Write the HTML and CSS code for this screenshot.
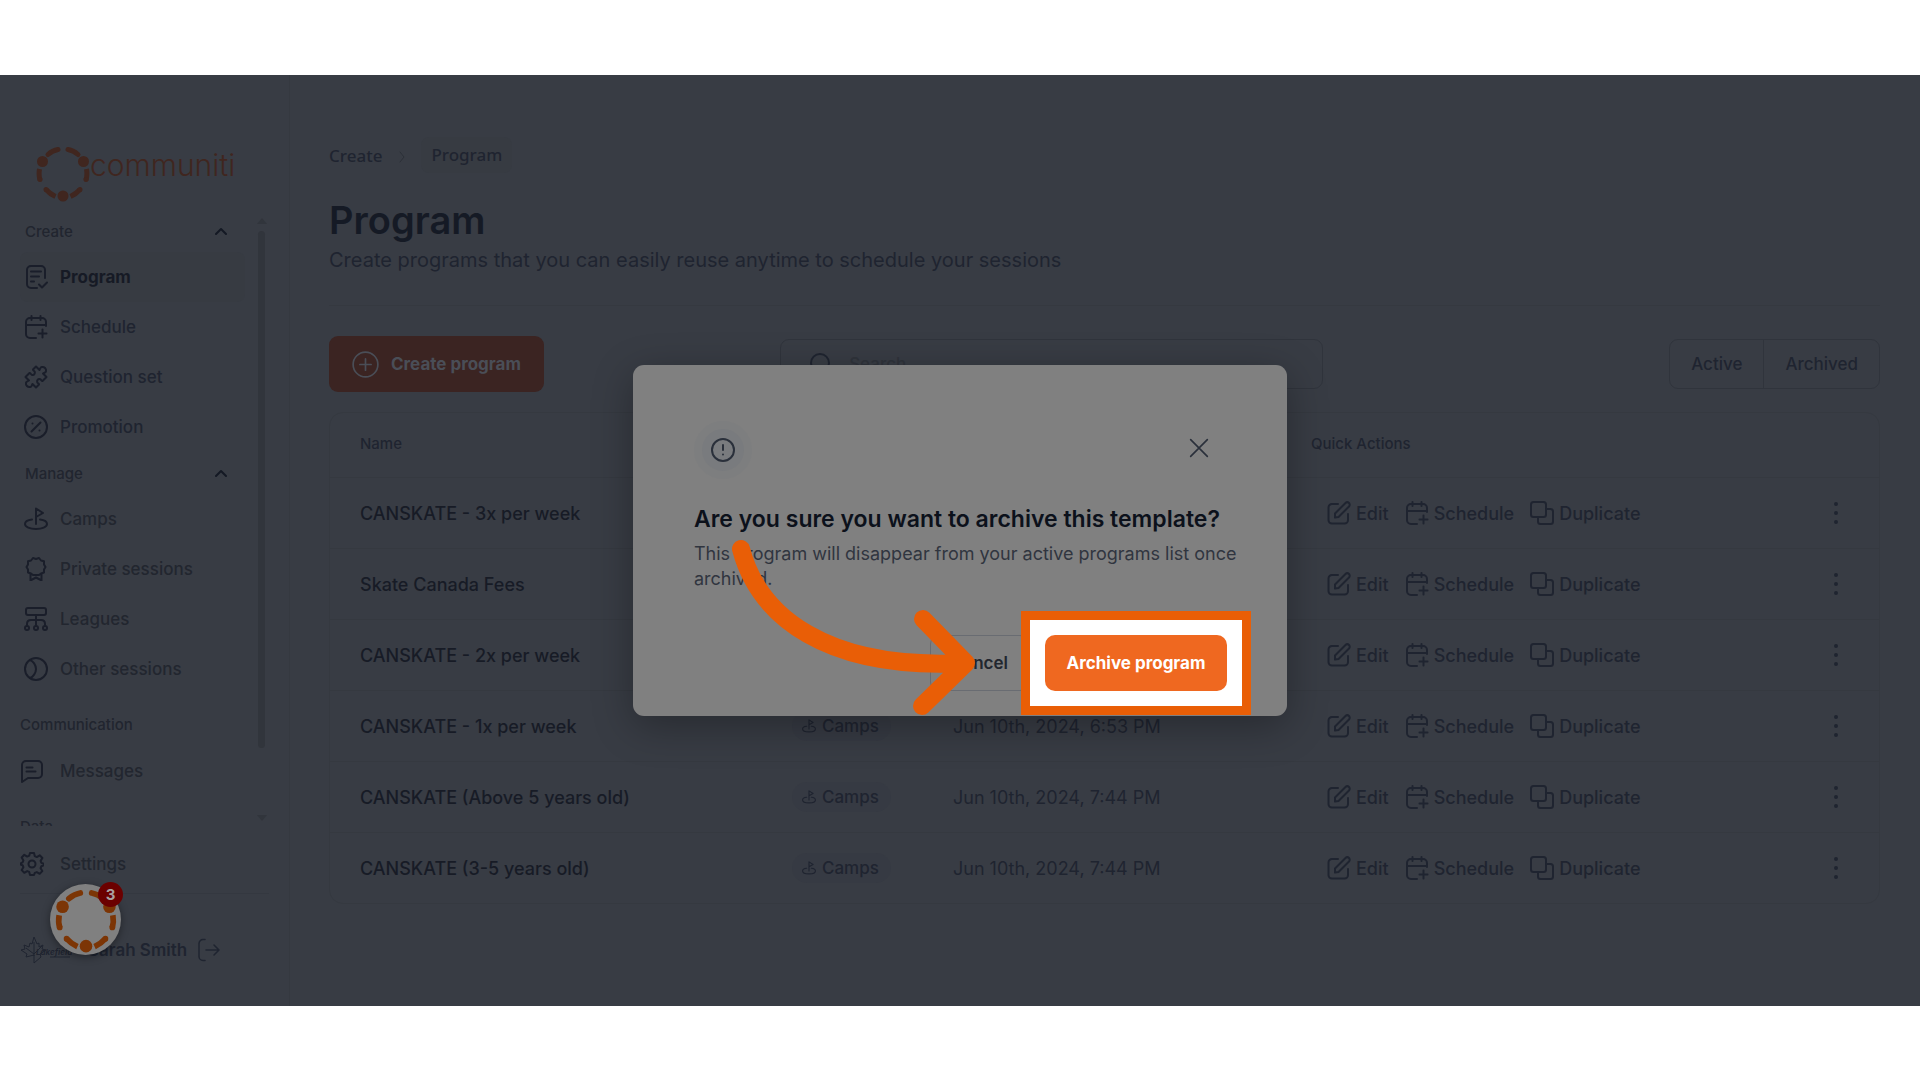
FILE: index.html
```
<!DOCTYPE html>
<html lang="en">
    <head>
        <title>Program - communiti</title>
        <meta charset="UTF-8" />
        <meta name="viewport" content="width=device-width, initial-scale=1" />
        <link rel="stylesheet" href="styles.css">
    </head>
    <body>
        <!-- shared icons -->
        <svg class="sprite" aria-hidden="true">
            <symbol id="ring" viewBox="0 0 54 56">
                <g fill="none" stroke="currentColor" stroke-width="5">
                    <path d="M12 8.500 Q16.500 4.500 22 3.500M32 3.500 Q37.500 4.500 42 8.500" stroke-linecap="round" />
                    <path d="M3.500 23 Q2.500 29 4 34M50.500 23 Q51.500 29 50 34" />
                    <path d="M4 33.500v.1M50 33.500v.1" stroke-linecap="round" />
                    <path d="M10 43.500 Q14 48 19.500 50.500M44 43.500 Q40 48 34.500 50.500" />
                    <path d="M10 43.500v.1M44 43.500v.1" stroke-linecap="round" />
                </g>
                <g fill="currentColor">
                    <circle cx="6.500" cy="15.500" r="5.500" />
                    <circle cx="47.500" cy="15.500" r="5.500" />
                    <circle cx="27" cy="50" r="5.500" />
                </g>
            </symbol>
            <symbol id="chevron" viewBox="0 0 12 12"><path d="M1 9l5-5 5 5" /></symbol>
            <symbol id="program" viewBox="0 0 24 24"><path d="M21 13V5a4 4 0 0 0-4-4H7a4 4 0 0 0-4 4v14a4 4 0 0 0 4 4h6M7 6.500h10M7 11.500h8M7 16.500h3M15 19.500l3 3 5-5" /></symbol>
            <symbol id="schedule" viewBox="0 0 24 24"><path d="M22 11V7a4 4 0 0 0-4-4H6a4 4 0 0 0-4 4v12a4 4 0 0 0 4 4h6M2 10h20M7.500 1v4M16.500 1v4M18.500 14.500v8M14.500 18.500h8" /></symbol>
            <symbol id="puzzle" viewBox="0 0 24 24"><path d="M12 1.500l3.500 3.500c.8-1.200.6-2.700 2.200-3 2.700-.5 4.800 1.600 4.300 4.300-.3 1.600-1.800 1.400-3 2.200l3.500 3.500-4 4c-1 .2-1.200-1.300-2.200-1.700-2.200-.8-3.800.8-3 3 .4 1 1.900 1.200 1.700 2.200L12 22.500 8.500 19c-.8 1.200-.6 2.700-2.200 3-2.700.5-4.800-1.600-4.300-4.300.3-1.600 1.800-1.400 3-2.200L1.500 12l4-4c1-.2 1.200 1.300 2.200 1.700 2.200.8 3.800-.8 3-3-.4-1-1.900-1.200-1.700-2.200z" /></symbol>
            <symbol id="promo" viewBox="0 0 24 24"><circle cx="12" cy="12" r="11" /><path d="M7.500 16.500l9-9M8.500 8.500v.1M15.500 15.500v.1" /></symbol>
            <symbol id="camp" viewBox="0 0 24 24"><path d="M12 17V1.500l7 4.500-7 4M8 12.500c-4 .4-7 2-7 4.500 0 3 5 5 11 5s11-2 11-5c0-2.500-3-4.100-7-4.500" /></symbol>
            <symbol id="award" viewBox="0 0 24 24"><path d="M12 2l3-1 2 2.500 3 .7v3.300l1.500 2.500-1.500 2.500v3l-3 1-2 1.500H9l-2-1.500-3-1v-3L2.500 10 4 7.500V4.200l3-.7L9 1zM6.500 17v6.500l5.500-3 5.500 3V17" /></symbol>
            <symbol id="league" viewBox="0 0 24 24"><rect x="2" y="1" width="20" height="7" rx="2" /><circle cx="3" cy="21" r="2" /><circle cx="12" cy="21" r="2" /><circle cx="21" cy="21" r="2" /><path d="M12 8v11M3 19v-2q0-4 4-4h10q4 0 4 4v2" /></symbol>
            <symbol id="ball" viewBox="0 0 24 24"><circle cx="12" cy="12" r="11" /><path d="M6 3c3 1 6 5 6 9s-3 8-6 9" /></symbol>
            <symbol id="message" viewBox="0 0 24 24"><path d="M2 23V6a4 4 0 0 1 4-4h12a4 4 0 0 1 4 4v9a4 4 0 0 1-4 4H8zM6.500 8.500h6M6.500 12.500h9" /></symbol>
            <symbol id="gear" viewBox="0 0 24 24"><circle cx="12" cy="12" r="3.500" /><path d="M10 1h4l.8 3.200 2 .9 2.900-1.800 2.700 2.700-1.800 2.900.8 2 2.600.8v1.600l-2.600.9-.8 2 1.700 2.900-2.600 2.700-2.900-1.700-2 .8L14 23h-4l-.8-3.100-2-.8-2.900 1.700-2.600-2.700 1.700-2.900-.8-2L1 12.800v-1.600l1.600-.8.8-2L1.700 5.500l2.600-2.700 2.900 1.800 2-.9z" /></symbol>
            <symbol id="logout" viewBox="0 0 24 24"><path d="M8 1.500H6a4 4 0 0 0-4 4v13a4 4 0 0 0 4 4h2M9 12h13M17 7l5 5-5 5" /></symbol>
            <symbol id="edit" viewBox="0 0 24 24"><path d="M11 3H5a3.500 3.500 0 0 0-3.500 3.500V19A3.500 3.500 0 0 0 5 22.500h12.500A3.500 3.500 0 0 0 21 19v-6M8 12.500L18.500 2a2.300 2.300 0 0 1 3.500 3.500L11.500 16 8 16.500z" /></symbol>
            <symbol id="copy" viewBox="0 0 24 24"><rect x="1" y="1" width="15" height="15" rx="2.500" /><path d="M16 8h4.500A2.500 2.500 0 0 1 23 10.500v10a2.500 2.500 0 0 1-2.500 2.500h-10A2.500 2.500 0 0 1 8 20.500V16" /></symbol>
            <symbol id="dots" viewBox="0 0 24 24"><path d="M12 3v.1M12 12v.1M12 21v.1" /></symbol>
            <symbol id="plus" viewBox="0 0 24 24"><circle cx="12" cy="12" r="11" /><path d="M12 7v10M7 12h10" /></symbol>
            <symbol id="search" viewBox="0 0 24 24"><circle cx="11" cy="11" r="9" /><path d="M18 18l4 4" /></symbol>
            <symbol id="alert" viewBox="0 0 24 24"><circle cx="12" cy="12" r="11" /><path d="M12 7v5M12 16.500v.1" /></symbol>
            <symbol id="close" viewBox="0 0 24 24"><path d="M2 2l20 20M22 2L2 22" /></symbol>
        </svg>

        <div class="screen">
            <aside class="sidebar">
                <a class="logo" href="#"><svg class="logo-ring"><use href="#ring" /></svg><span>communiti</span></a>
                <div class="nav-scroll">
                    <nav class="nav">
                        <button class="nav-group">Create <svg class="icon chevron"><use href="#chevron" /></svg></button>
                        <a class="nav-item active" href="#"><svg class="icon"><use href="#program" /></svg>Program</a>
                        <a class="nav-item" href="#"><svg class="icon"><use href="#schedule" /></svg>Schedule</a>
                        <a class="nav-item" href="#"><svg class="icon"><use href="#puzzle" /></svg>Question set</a>
                        <a class="nav-item" href="#"><svg class="icon"><use href="#promo" /></svg>Promotion</a>
                        <button class="nav-group">Manage <svg class="icon chevron"><use href="#chevron" /></svg></button>
                        <a class="nav-item dim" href="#"><svg class="icon"><use href="#camp" /></svg>Camps</a>
                        <a class="nav-item dim" href="#"><svg class="icon"><use href="#award" /></svg>Private sessions</a>
                        <a class="nav-item dim" href="#"><svg class="icon"><use href="#league" /></svg>Leagues</a>
                        <a class="nav-item dim" href="#"><svg class="icon"><use href="#ball" /></svg>Other sessions</a>
                        <h2 class="nav-title">Communication</h2>
                        <a class="nav-item flush dim" href="#"><svg class="icon"><use href="#message" /></svg>Messages</a>
                        <h2 class="nav-title">Data</h2>
                    </nav>
                    <div class="scrollbar"><i class="up"></i><i class="thumb"></i><i class="down"></i></div>
                </div>
                <div class="settings"><a class="nav-item flush dim" href="#"><svg class="icon"><use href="#gear" /></svg>Settings</a></div>
                <div class="user">
                    <svg class="club" viewBox="0 0 52 28" aria-label="Lakefield">
                        <path d="M14 27v-8l-8 2 1-3-6-4 4-1-1-4 5 2 1-4 2 1 2-7 3 7 2-1 0 4 4-2-1 4 4 1-6 4 1 3zM14 20V6M14 18l-8-6M14 18l8-8" fill="none" stroke="currentColor" />
                        <text x="16" y="19">Lakefield</text>
                        <path d="M30 21h20" stroke="currentColor" />
                    </svg>
                    <span class="user-name">Sarah Smith</span>
                    <button class="icon-btn" aria-label="Log out"><svg class="icon thin"><use href="#logout" /></svg></button>
                </div>
                <button class="launcher" aria-label="Open help, 3 unread"><svg><use href="#ring" /></svg><span class="count">3</span></button>
            </aside>

            <main class="content">
                <nav class="crumbs"><a href="#">Create</a><svg class="icon sep" viewBox="0 0 6 14"><path d="M1 2l4 5-4 5" /></svg><a class="current" href="#">Program</a></nav>
                <header class="heading">
                    <h1>Program</h1>
                    <p>Create programs that you can easily reuse anytime to schedule your sessions</p>
                </header>
                <div class="toolbar">
                    <button class="create"><svg class="icon thin"><use href="#plus" /></svg>Create program</button>
                    <label class="search"><svg class="icon"><use href="#search" /></svg><input type="search" placeholder="Search" aria-label="Search" /></label>
                    <div class="segmented"><button>Active</button><button>Archived</button></div>
                </div>
                <div class="table-wrap">
                    <table>
                        <thead>
                            <tr><th class="col-name">Name</th><th class="col-type">Type</th><th class="col-date">Created</th><th>Quick Actions</th><th class="col-more"></th></tr>
                        </thead>
                        <tbody id="rows"></tbody>
                    </table>
                </div>
            </main>

            <div class="modal" role="dialog" aria-labelledby="modal-title">
                <div class="modal-top">
                    <span class="modal-icon"><svg class="icon"><use href="#alert" /></svg></span>
                    <button class="icon-btn" aria-label="Close"><svg class="icon close"><use href="#close" /></svg></button>
                </div>
                <h2 id="modal-title">Are you sure you want to archive this template?</h2>
                <p>This program will disappear from your active programs list once archived.</p>
                <div class="modal-actions">
                    <button class="cancel">Cancel</button>
                    <div class="highlight"><button class="archive">Archive program</button></div>
                </div>
                <svg class="arrow" viewBox="0 0 260 180"><path d="M14 12C32 80 100 133 237 126M196 82L239 126L195 169" /></svg>
            </div>
        </div>
        <script src="script.js"></script>
    </body>
</html>
```
FILE: styles.css
```
* {
    box-sizing: border-box;
}
body {
    margin: 0;
    padding: 75px 0;
    background: #fff;
    font-family: Inter, "Liberation Sans", sans-serif;
    font-size: 17px;
    font-weight: 500;
    color: #1f2430;
}
a {
    color: inherit;
    text-decoration: none;
}
button,
input {
    font: inherit;
    color: inherit;
    background: none;
    border: 0;
    padding: 0;
}
h1,
h2,
p {
    margin: 0;
}
.sprite {
    position: absolute;
    width: 0;
    height: 0;
}
.icon {
    flex: none;
    width: 24px;
    height: 24px;
    fill: none;
    stroke: currentColor;
    stroke-width: 2;
    stroke-linecap: round;
    stroke-linejoin: round;
}
.thin {
    stroke-width: 1.5;
}
.screen {
    position: relative;
    display: flex;
    min-height: 930px;
    background: #383c44;
}

/* Sidebar */
.sidebar {
    position: relative;
    flex: none;
    display: flex;
    flex-direction: column;
    width: 290px;
    padding: 71px 20px 0;
    border-right: 1px solid #353940;
}
.logo {
    display: flex;
    height: 64px;
    margin-left: 16px;
    color: #40261f;
    font-size: 30px;
    font-weight: 300;
}
.logo-ring {
    width: 54px;
    height: 56px;
}
.logo span {
    line-height: 38px;
}
.nav-scroll {
    display: flex;
    justify-content: space-between;
    height: 616px;
    padding-right: 3px;
    overflow: hidden;
}
.nav {
    width: 225px;
}
.nav-group {
    display: flex;
    align-items: center;
    justify-content: space-between;
    width: 100%;
    height: 42px;
    padding: 0 18px 0 5px;
    font-size: 15px;
    color: #21252f;
}
.chevron {
    width: 12px;
    height: 12px;
    color: #141924;
}
.nav-item {
    display: flex;
    align-items: center;
    gap: 12px;
    height: 50px;
    padding-left: 4px;
    border-radius: 8px;
}
.nav-item.active {
    background: #373b42;
    color: #161a25;
    font-weight: 700;
}
.nav-item.dim {
    color: #22262f;
}
.nav-item .icon {
    color: #1a1e2a;
}
.nav-item.flush {
    gap: 16px;
    padding-left: 0;
}
.nav-title {
    padding: 14px 0 4px;
    font-size: 15px;
    font-weight: 500;
    line-height: 34px;
    color: #21252f;
}
.scrollbar {
    display: flex;
    flex-direction: column;
    align-items: center;
    width: 9px;
    padding-top: 8px;
}
.up,
.down {
    border: 5px solid transparent;
    border-top: 0;
    border-bottom: 6px solid #31353c;
}
.down {
    margin-top: auto;
    margin-bottom: 5px;
    border-top: 6px solid #31353c;
    border-bottom: 0;
}
.thumb {
    width: 7px;
    height: 517px;
    margin-top: 7px;
    border-radius: 4px;
    background: #31353c;
}
.settings {
    padding: 13px 0 4px;
    border-bottom: 1px solid #343840;
}
.user {
    display: flex;
    align-items: center;
    height: 112px;
    font-weight: 600;
}
.club {
    width: 52px;
    height: 28px;
    margin-right: 16px;
}
.club text {
    font-size: 8px;
    font-style: italic;
    font-weight: 700;
    fill: currentColor;
}
.user-name {
    margin-right: 10px;
}
.icon-btn {
    display: flex;
}
.launcher {
    position: absolute;
    left: 50px;
    top: 809px;
    width: 71px;
    height: 71px;
    border-radius: 50%;
    background: #808080;
    color: #7c3505;
    box-shadow: 0 2px 8px rgba(0, 0, 0, 0.4);
}
.launcher svg {
    width: 62px;
    height: 64px;
    margin-top: 5px;
}
.count {
    position: absolute;
    top: -2px;
    right: -2px;
    width: 25px;
    border-radius: 50%;
    background: #6b0000;
    color: #a9a0a0;
    font-size: 15px;
    font-weight: 700;
    line-height: 25px;
}

/* Content */
.content {
    flex: 1;
    min-width: 0;
    padding: 62px 40px 0 39px;
}
.crumbs {
    display: flex;
    align-items: center;
    height: 36px;
    font-family: "Noto Sans", "Open Sans", sans-serif;
    font-size: 17px;
}
.sep {
    width: 6px;
    height: 14px;
    margin: 4px 16px 0 17px;
    stroke: #2c3038;
    stroke-width: 1;
}
.current {
    padding: 0 10px;
    border-radius: 8px;
    background: #373b42;
    line-height: 36px;
}
.heading {
    height: 133px;
    padding-top: 23px;
    border-bottom: 1px solid #353940;
}
.heading h1 {
    font-size: 38px;
    font-weight: 600;
    line-height: 48px;
    color: #151a25;
}
.heading p {
    font-size: 20px;
    font-weight: 400;
    line-height: 32px;
}
.toolbar {
    display: flex;
    align-items: center;
    justify-content: space-between;
    padding: 30px 0 20px;
}
.create {
    display: flex;
    align-items: center;
    gap: 12px;
    height: 56px;
    padding: 0 23px;
    border-radius: 9px;
    background: #3b2422;
    color: #4a4e57;
    font-weight: 700;
}
.create .icon {
    width: 27px;
    height: 27px;
}
.search {
    display: flex;
    align-items: center;
    gap: 16px;
    width: 35%;
    height: 50px;
    margin-right: 110px;
    padding: 0 28px;
    border: 1px solid #30343c;
    border-radius: 9px;
}
.search input {
    flex: 1;
}
.search input::placeholder {
    color: #2f333b;
}
.segmented {
    display: flex;
    height: 50px;
    border: 1px solid #30343c;
    border-radius: 9px;
}
.segmented button {
    padding: 0 21px;
}
.segmented button + button {
    border-left: 1px solid #30343c;
}
.table-wrap {
    border: 1px solid #353940;
    border-radius: 14px;
}
table {
    width: 100%;
    table-layout: fixed;
    border-spacing: 0;
    font-size: 18px;
}
th,
td {
    padding: 0 0 0 30px;
    text-align: left;
}
th {
    height: 64px;
    padding-bottom: 4px;
    font-size: 15px;
    font-weight: 500;
}
td {
    height: 71px;
    border-top: 1px solid #353940;
}
.col-name {
    width: 432px;
}
.col-type {
    width: 161px;
}
.col-date {
    width: 358px;
}
.col-more {
    width: 85px;
}
.name {
    color: #171b26;
}
.date {
    font-weight: 400;
}
.badge {
    display: inline-flex;
    align-items: center;
    gap: 6px;
    height: 30px;
    padding: 0 12px 0 10px;
    border-radius: 15px;
    background: #363a43;
    font-size: 17px;
}
.badge .icon {
    width: 14px;
    height: 14px;
}
.actions {
    display: flex;
    gap: 16px;
    padding-left: 16px;
}
.actions button {
    display: flex;
    align-items: center;
    gap: 5px;
}
.more {
    stroke-width: 4;
}

/* Archive dialog */
.modal {
    position: absolute;
    top: 290px;
    left: 50%;
    width: 654px;
    padding: 56px 36px 1px 61px;
    transform: translateX(-50%);
    border-radius: 11px;
    background: #808080;
    box-shadow: 0 10px 40px rgba(0, 0, 0, 0.3);
}
.modal-top {
    display: flex;
    align-items: center;
    justify-content: space-between;
    padding-right: 42px;
    color: #2a303b;
}
.modal-top .icon-btn {
    padding-bottom: 4px;
}
.modal-icon {
    display: flex;
    padding: 9px;
    border: 8px solid #7d7e7f;
    border-radius: 50%;
    background: #797b7e;
}
.close {
    width: 20px;
    height: 20px;
}
.modal h2 {
    margin-top: 24px;
    font-size: 23px;
    font-weight: 600;
    line-height: 32px;
    color: #0c111b;
}
.modal p {
    margin-top: 6px;
    font-size: 18px;
    font-weight: 400;
    line-height: 25px;
    color: #30353f;
}
.modal-actions {
    display: flex;
    align-items: center;
    justify-content: flex-end;
    margin-top: 20px;
}
.cancel {
    height: 56px;
    margin-right: -8px;
    padding: 0 20px;
    border: 1px solid #696c72;
    border-radius: 9px;
    color: #22272f;
    font-weight: 600;
}
.highlight {
    position: relative;
    padding: 15px;
    border: 9px solid #e95e06;
    background: #fff;
}
.archive {
    height: 56px;
    min-width: 182px;
    padding: 0 20px;
    border-radius: 10px;
    background: #ef6820;
    color: #fff;
    font-weight: 700;
}
.arrow {
    position: absolute;
    left: 94px;
    top: 172px;
    width: 260px;
    height: 180px;
    fill: none;
    stroke: #e95e06;
    stroke-width: 18;
    stroke-linecap: round;
    stroke-linejoin: round;
}
```
FILE: script.js
```
const programs = [
    ["CANSKATE - 3x per week", "Jun 10th, 2024, 6:53 PM"],
    ["Skate Canada Fees", "Jun 10th, 2024, 6:53 PM"],
    ["CANSKATE - 2x per week", "Jun 10th, 2024, 6:53 PM"],
    ["CANSKATE - 1x per week", "Jun 10th, 2024, 6:53 PM"],
    ["CANSKATE (Above 5 years old)", "Jun 10th, 2024, 7:44 PM"],
    ["CANSKATE (3-5 years old)", "Jun 10th, 2024, 7:44 PM"],
];

const icon = (id, extra = "") =>
    `<svg class="icon ${extra}"><use href="#${id}" /></svg>`;

document.getElementById("rows").innerHTML = programs
    .map(
        ([name, date]) => `<tr>
            <td class="name">${name}</td>
            <td><span class="badge">${icon("camp")}Camps</span></td>
            <td class="date">${date}</td>
            <td><div class="actions">
                <button>${icon("edit")}Edit</button>
                <button>${icon("schedule")}Schedule</button>
                <button>${icon("copy")}Duplicate</button>
            </div></td>
            <td><button class="icon-btn" aria-label="More">${icon("dots", "more")}</button></td>
        </tr>`,
    )
    .join("");
```
